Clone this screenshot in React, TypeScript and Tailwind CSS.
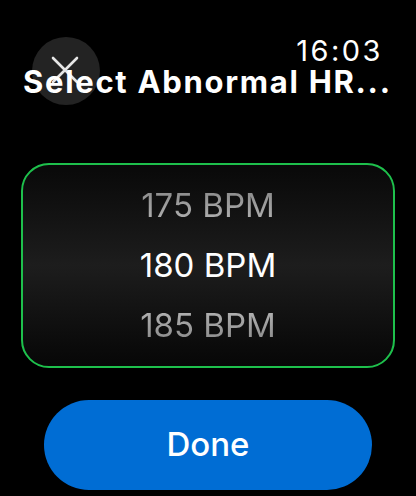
import React from 'react';

const rows = [
  { label: '175 BPM', cls: 'bg-gradient-to-b from-[#7a7a7a] to-[#c4c4c4] bg-clip-text text-transparent' },
  { label: '180 BPM', cls: 'text-white' },
  { label: '185 BPM', cls: 'bg-gradient-to-b from-[#c4c4c4] to-[#7a7a7a] bg-clip-text text-transparent' },
];

export default function App() {
  return (
    <div className="w-[416px] h-[496px] bg-black overflow-hidden font-['Inter',sans-serif] text-white">
      {/* Header */}
      <div className="relative h-[110px]">
        <button className="absolute left-[32px] top-[37px] w-[68px] h-[68px] rounded-full bg-[#232323] flex items-center justify-center">
          <svg width="30" height="30" viewBox="0 0 30 30" className="-mt-[2px] -ml-[2px]">
            <path d="M3 3 L27 27 M27 3 L3 27" stroke="#e6e6e6" strokeWidth="2.6" strokeLinecap="round" />
          </svg>
        </button>
        <div className="absolute right-[33px] top-[38px] text-[29px] leading-[26px] tracking-[2.5px]">16:03</div>
        <div className="absolute left-[23px] top-[65px] text-[31px] font-bold leading-[34px] tracking-[1.7px] whitespace-nowrap">
          Select Abnormal HR...
        </div>
      </div>

      {/* Picker */}
      <div className="mx-[21px] mt-[53px] h-[205px] rounded-[28px] border-[2.5px] border-[#1ec04c] bg-gradient-to-b from-[#090909] via-[#1d1d1d] to-[#070707] flex flex-col items-center justify-center">
        {rows.map((r) => (
          <div key={r.label} className={`h-[60px] flex items-center text-[33px] leading-none ${r.cls}`}>
            {r.label}
          </div>
        ))}
      </div>

      {/* Done */}
      <div className="px-[44px] mt-[32px]">
        <button className="w-full h-[90px] rounded-full bg-[#006dd4] text-[33px] font-medium">Done</button>
      </div>
    </div>
  );
}
